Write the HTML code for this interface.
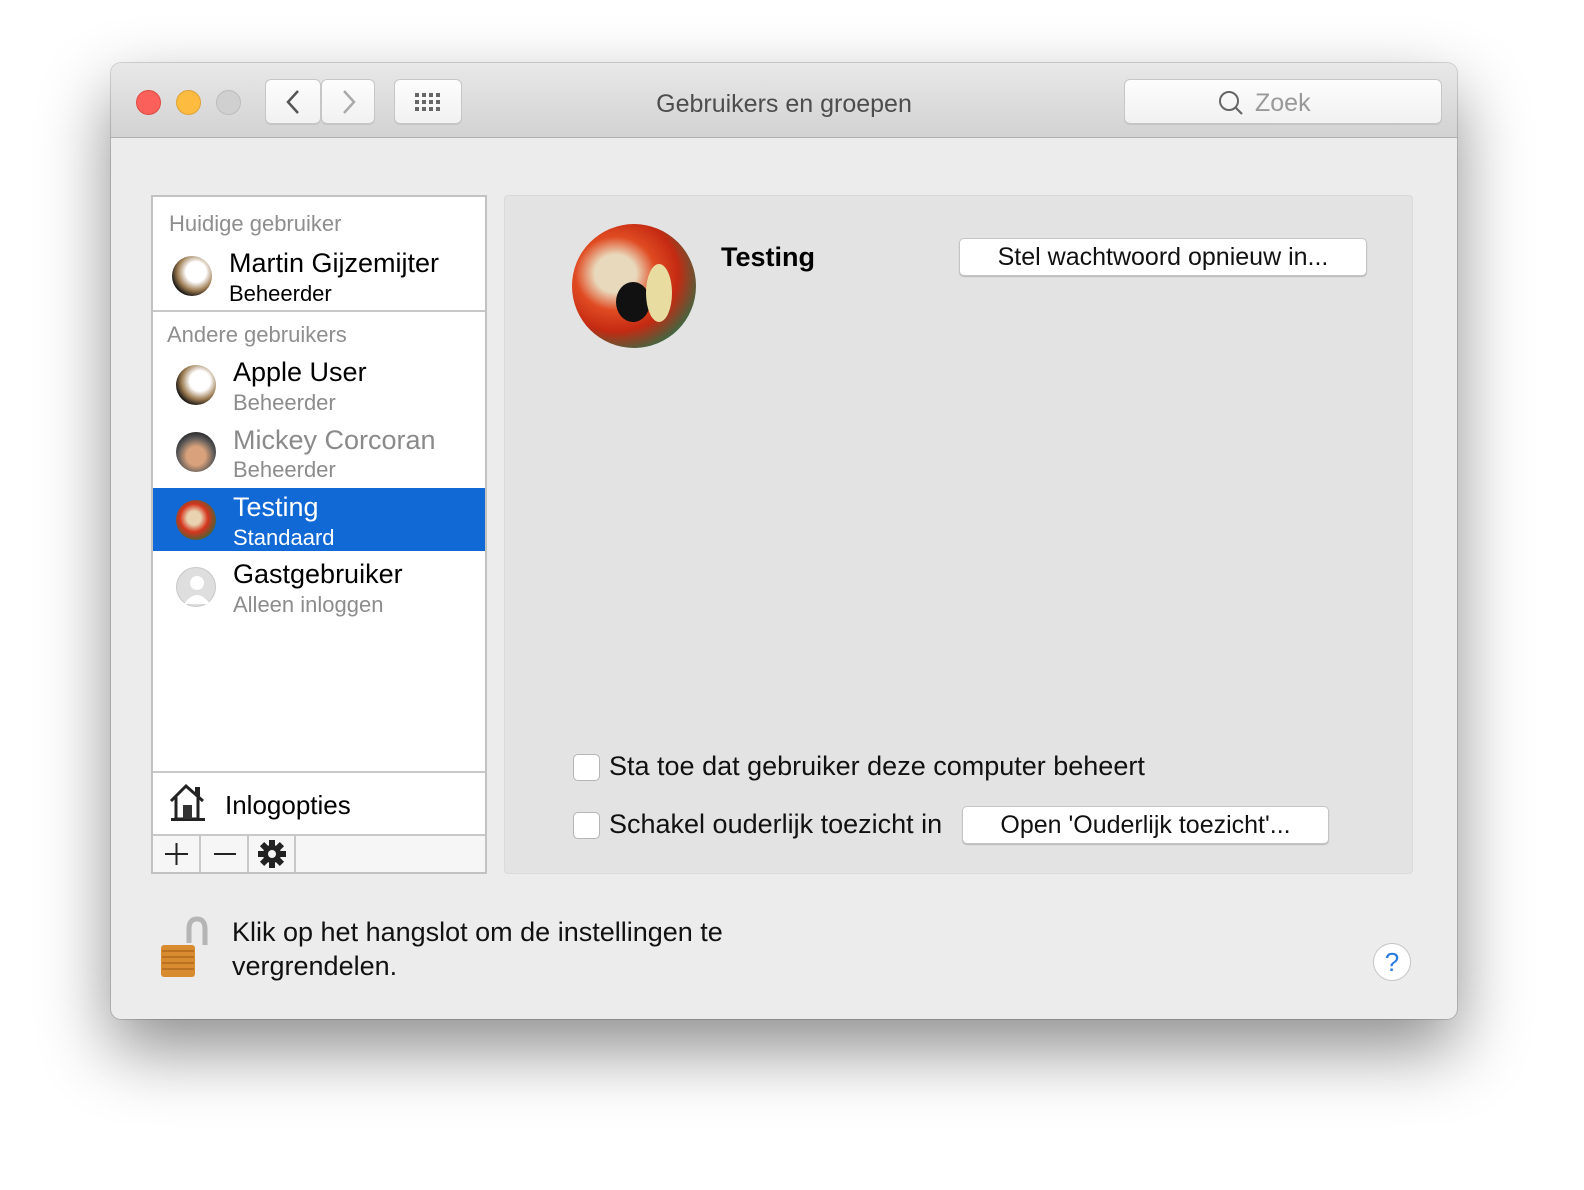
<!DOCTYPE html>
<html><head><meta charset="utf-8"><style>
*{box-sizing:border-box;margin:0;padding:0}
body{width:1584px;height:1190px;background:#fff;font-family:"Liberation Sans",sans-serif;position:relative;overflow:hidden}
.win{position:absolute;left:111px;top:63px;width:1346px;height:956px;background:#ececec;border-radius:10px;box-shadow:0 30px 70px rgba(0,0,0,.45),0 0 0 1px rgba(0,0,0,.15);overflow:hidden}
.tb{position:absolute;left:0;top:0;width:100%;height:75px;background:linear-gradient(#e9e8e9,#d3d2d3);border-bottom:1px solid #b1b1b1}
.dot{position:absolute;top:27px;width:25px;height:25px;border-radius:50%}
.btn{position:absolute;background:linear-gradient(#fdfdfd,#f1f1f1);border:1px solid #c6c6c6;border-radius:6px;box-shadow:0 1px 0 rgba(0,0,0,.08)}
.abs{position:absolute}
.side{position:absolute;left:40px;top:132px;width:336px;height:679px;background:#fff;border:2px solid #c2c2c2}
.hd{position:absolute;font-size:22px;color:#8e8e8e}
.nm{position:absolute;font-size:27px;color:#000}
.sb{position:absolute;font-size:22px;color:#8c8c8c}
.av{position:absolute;width:40px;height:40px;border-radius:50%}
.pane{position:absolute;left:393px;top:132px;width:909px;height:679px;background:#e3e3e3;border:1px solid #dadada;border-radius:4px}
.cb{position:absolute;width:27px;height:27px;background:#fff;border:1px solid #b5b5b5;border-radius:5px}
.pb{position:absolute;background:#fff;border:1px solid #c5c5c5;border-radius:5px;box-shadow:0 1px 1px rgba(0,0,0,.2);font-size:25px;color:#111;text-align:center}
</style></head><body>
<div class="win">
 <div class="tb">
  <div class="dot" style="left:25px;background:#fc605b;border:1px solid #de4a43"></div>
  <div class="dot" style="left:65px;background:#fdbc40;border:1px solid #dea236"></div>
  <div class="dot" style="left:105px;background:#d0d0d0;border:1px solid #bcbcbc"></div>
  <div class="btn" style="left:154px;top:16px;width:56px;height:45px"><svg width="56" height="45"><path d="M32 11 L22 22 L32 33" stroke="#555" stroke-width="2.5" fill="none"/></svg></div>
  <div class="btn" style="left:210px;top:16px;width:54px;height:45px"><svg width="54" height="45"><path d="M22 11 L32 22 L22 33" stroke="#aaa" stroke-width="2.5" fill="none"/></svg></div>
  <div class="btn" style="left:283px;top:16px;width:68px;height:45px"><svg width="68" height="45" fill="#666"><g id="r"><rect x="20" y="13" width="4" height="4"/><rect x="27" y="13" width="4" height="4"/><rect x="34" y="13" width="4" height="4"/><rect x="41" y="13" width="4" height="4"/></g><use href="#r" y="7"/><use href="#r" y="14"/></svg></div>
  <div class="abs" style="left:0;width:1346px;top:27px;text-align:center;font-size:25px;color:#4d4d4d">Gebruikers en groepen</div>
  <div class="btn" style="left:1013px;top:16px;width:318px;height:45px;border-radius:6px"><svg class="abs" style="left:92px;top:9px" width="28" height="28"><circle cx="12" cy="12" r="9" stroke="#666" stroke-width="2" fill="none"/><path d="M18.5 18.5 L25 25" stroke="#666" stroke-width="2.2"/></svg><span class="abs" style="left:130px;top:9px;font-size:25px;color:#999">Zoek</span></div>
 </div>
 <div class="side">
  <div class="hd" style="left:16px;top:14px">Huidige gebruiker</div>
  <div class="av" style="left:19px;top:59px;background:radial-gradient(circle at 60% 40%,#fff 0 30%,#9b7a50 55%,#111 75%)"></div>
  <div class="nm" style="left:76px;top:51px">Martin Gijzemijter</div>
  <div class="sb" style="left:76px;top:84px;color:#000">Beheerder</div>
  <div class="abs" style="left:0;top:113px;width:332px;height:2px;background:#c8c8c8"></div>
  <div class="hd" style="left:14px;top:125px">Andere gebruikers</div>
  <div class="av" style="left:23px;top:168px;background:radial-gradient(circle at 60% 40%,#fff 0 30%,#9b7a50 55%,#111 75%)"></div>
  <div class="nm" style="left:80px;top:160px">Apple User</div>
  <div class="sb" style="left:80px;top:193px">Beheerder</div>
  <div class="av" style="left:23px;top:235px;background:radial-gradient(circle at 50% 60%,#d9a27c 0 30%,#555 60%,#222 80%)"></div>
  <div class="nm" style="left:80px;top:228px;color:#8a8a8a">Mickey Corcoran</div>
  <div class="sb" style="left:80px;top:260px">Beheerder</div>
  <div class="abs" style="left:0;top:291px;width:332px;height:63px;background:#1169d6"></div>
  <div class="av" style="left:23px;top:303px;background:radial-gradient(circle at 45% 45%,#e8d2b0 0 22%,#d5351d 45%,#2f6a3a 80%)"></div>
  <div class="nm" style="left:80px;top:295px;color:#fff">Testing</div>
  <div class="sb" style="left:80px;top:328px;color:#fff">Standaard</div>
  <div class="av" style="left:23px;top:370px;background:#dedede;border:1px solid #c8c8c8"><svg width="40" height="40"><circle cx="20" cy="15" r="7" fill="#fff"/><path d="M7 36 Q20 18 33 36Z" fill="#fff"/></svg></div>
  <div class="nm" style="left:80px;top:362px">Gastgebruiker</div>
  <div class="sb" style="left:80px;top:395px">Alleen inloggen</div>
  <div class="abs" style="left:0;top:574px;width:332px;height:2px;background:#c8c8c8"></div>
  <svg class="abs" style="left:14px;top:584px" width="44" height="44"><path d="M4 20 L19 5 L36 20 M9 16 V38 H31 V16 M30 9 V14" stroke="#222" stroke-width="3" fill="none"/><rect x="28" y="6" width="5" height="9" fill="#222"/><rect x="4" y="37" width="34" height="3" fill="#222"/><rect x="16" y="24" width="9" height="14" fill="#333"/></svg>
  <div class="nm" style="left:72px;top:593px;font-size:26px">Inlogopties</div>
  <div class="abs" style="left:0;top:637px;width:332px;height:2px;background:#c8c8c8"></div>
  <div class="abs" style="left:0;top:639px;width:332px;height:36px;background:#f6f6f6"></div>
  <div class="abs" style="left:46px;top:639px;width:2px;height:36px;background:#c8c8c8"></div>
  <div class="abs" style="left:94px;top:639px;width:2px;height:36px;background:#c8c8c8"></div>
  <div class="abs" style="left:141px;top:639px;width:2px;height:36px;background:#c8c8c8"></div>
  <svg class="abs" style="left:0;top:639px" width="150" height="36"><path d="M12 18H35M23.5 7V29M61 18H83" stroke="#222" stroke-width="2"/><g transform="translate(119,18)" fill="#222"><circle r="9"/><g id="t"><rect x="-3" y="-14" width="6" height="28"/></g><use href="#t" transform="rotate(45)"/><use href="#t" transform="rotate(90)"/><use href="#t" transform="rotate(135)"/><circle r="4" fill="#f6f6f6"/></g></svg>
 </div>
 <div class="pane">
  <div class="abs" style="left:67px;top:28px;width:124px;height:124px;border-radius:50%;background:radial-gradient(ellipse at 35% 40%,#e9d9bc 0 18%,#e04b22 35%,#c42a12 55%,#2c7048 80%)"><div class="abs" style="left:44px;top:58px;width:34px;height:40px;border-radius:50%;background:#111"></div><div class="abs" style="left:74px;top:40px;width:26px;height:58px;border-radius:50%;background:#e8dca0"></div></div>
  <div class="abs" style="left:216px;top:46px;font-size:27px;font-weight:bold">Testing</div>
  <div class="pb" style="left:454px;top:42px;width:408px;height:38px;line-height:36px">Stel wachtwoord opnieuw in...</div>
  <div class="cb" style="left:68px;top:558px"></div>
  <div class="abs" style="left:104px;top:555px;font-size:27px;color:#111">Sta toe dat gebruiker deze computer beheert</div>
  <div class="cb" style="left:68px;top:616px"></div>
  <div class="abs" style="left:104px;top:613px;font-size:27px;color:#111">Schakel ouderlijk toezicht in</div>
  <div class="pb" style="left:457px;top:610px;width:367px;height:38px;line-height:36px">Open 'Ouderlijk toezicht'...</div>
 </div>
 <svg class="abs" style="left:48px;top:852px" width="52" height="66"><path d="M30 28 V14 Q30 4 38 4 Q46 4 46 14 V30" stroke="#b5b5b5" stroke-width="5" fill="none"/><rect x="2" y="30" width="34" height="32" rx="3" fill="#d98b30"/><g stroke="#b06a1e" stroke-width="1.5"><path d="M3 36H35M3 42H35M3 48H35M3 54H35"/></g></svg>
 <div class="abs" style="left:121px;top:852px;font-size:27px;color:#111;line-height:34px">Klik op het hangslot om de instellingen te<br>vergrendelen.</div>
 <div class="abs" style="left:1262px;top:880px;width:38px;height:38px;border-radius:50%;background:#fff;border:1px solid #c5c5c5;color:#2a7ae2;font-size:26px;text-align:center;line-height:36px">?</div>
</div>
</body></html>
